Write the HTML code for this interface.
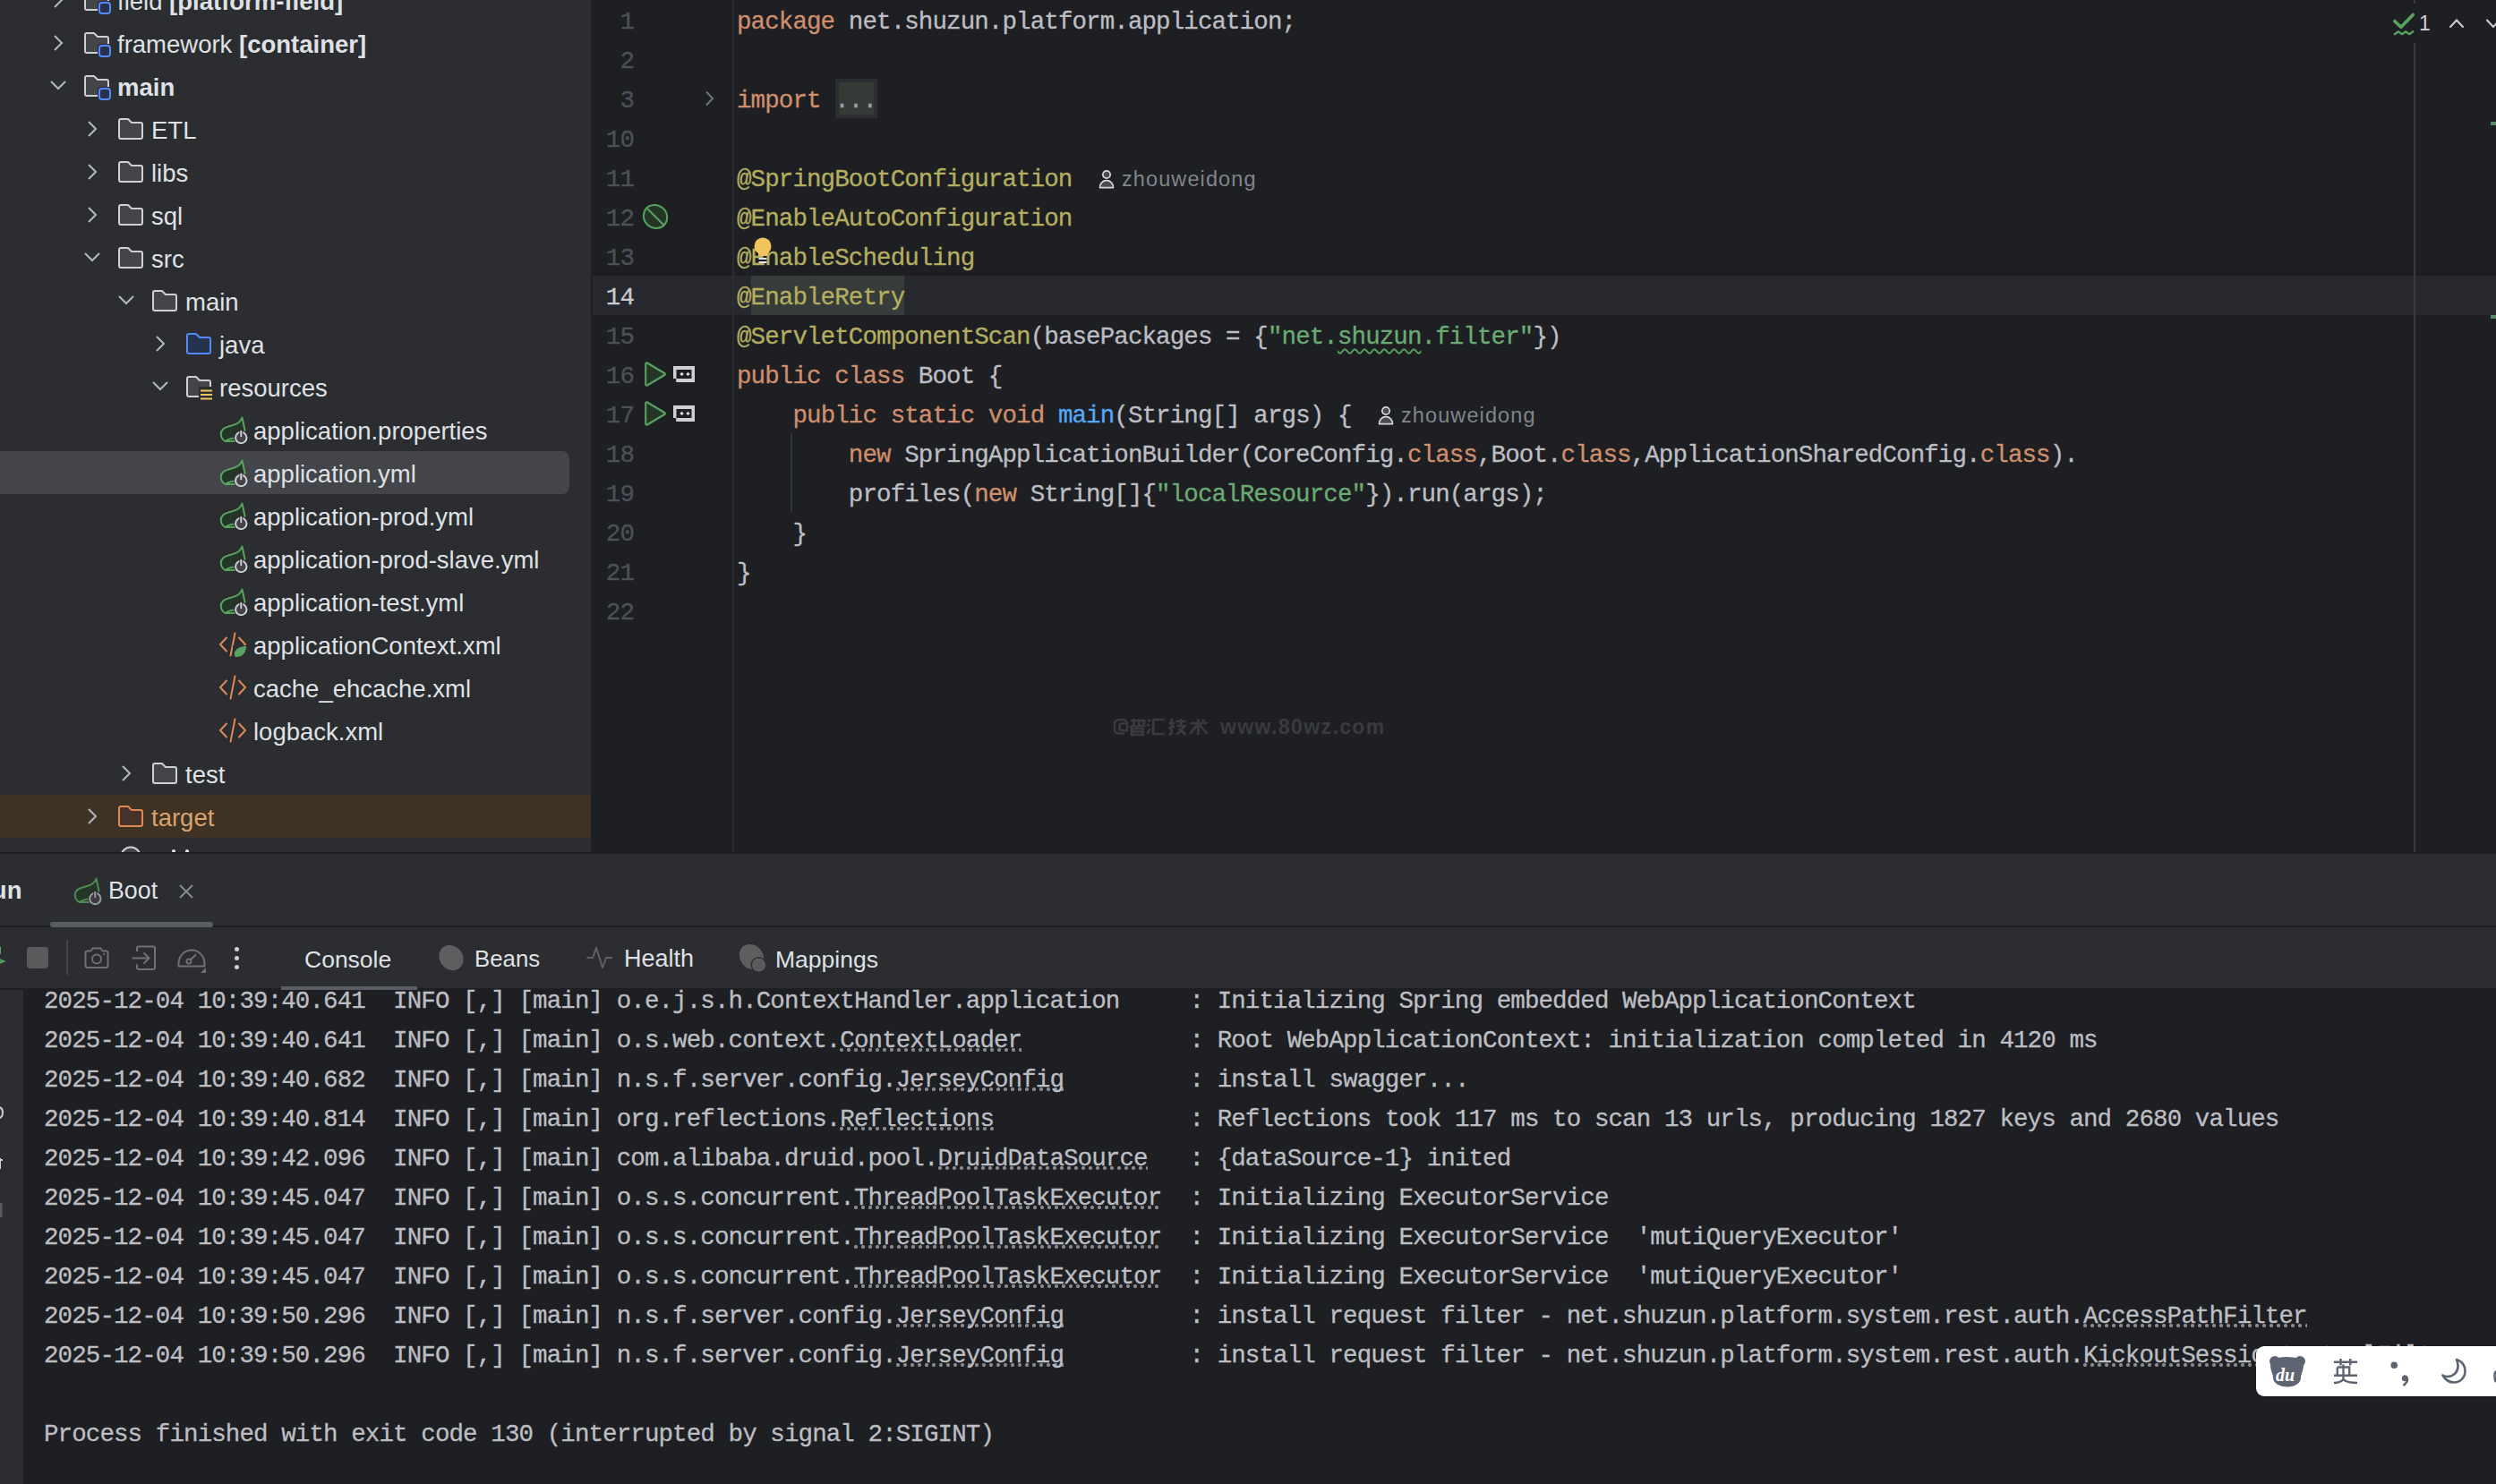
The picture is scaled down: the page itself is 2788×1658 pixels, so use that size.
<!DOCTYPE html><html><head><meta charset="utf-8"><style>
*{margin:0;padding:0;box-sizing:border-box}
html,body{width:2788px;height:1658px;overflow:hidden;background:#1E1F22}
body{position:relative;font-family:"Liberation Sans",sans-serif}
.abs{position:absolute}
.ui{font-family:"Liberation Sans",sans-serif;white-space:pre;color:#DFE1E5;position:absolute;line-height:1}
.mono{font-family:"Liberation Mono",monospace;white-space:pre;position:absolute;font-size:27.5px;letter-spacing:-0.9px;line-height:44px;color:#BCBEC4;-webkit-text-stroke:0.3px currentColor}
svg{position:absolute;overflow:visible}
.kw{color:#CF8E6D} .ann{color:#B3AE60} .str{color:#6AAB73} .fn{color:#56A8F5}
.dl{background-image:radial-gradient(circle at 4px 4px,#85878C 1.9px,transparent 2.3px);background-size:8px 8px;background-repeat:repeat-x;background-position:-2px calc(100% - 1px)}
</style></head><body>
<div class="abs" style="left:0;top:0;width:660px;height:952px;background:#2B2D30;overflow:hidden">
<div class="abs" style="left:0;top:504px;width:636px;height:48px;background:#43454A;border-radius:0 8px 8px 0"></div>
<div class="abs" style="left:0;top:888px;width:660px;height:48px;background:#3D3223"></div>
<svg style="left:49px;top:-16px" width="32" height="32" viewBox="0 0 32 32"><path d="M12 8L20 16L12 24" fill="none" stroke="#B4B8BF" stroke-width="2"/></svg>
<svg style="left:92px;top:-16px" width="32" height="32" viewBox="0 0 32 32"><path d="M3 7C3 5.9 3.9 5 5 5H12.6C12.85 5 13.1 5.1 13.3 5.3L16.7 8.7C16.9 8.9 17.15 9 17.4 9H27C28.1 9 29 9.9 29 11V25C29 26.1 28.1 27 27 27H5C3.9 27 3 26.1 3 25V7Z" fill="#43454A" stroke="#CED0D6" stroke-width="2"/><rect x="17" y="17" width="16" height="16" rx="4" fill="#2B2D30"/><rect x="19" y="19" width="12" height="12" rx="3" fill="#25324D" stroke="#548AF7" stroke-width="2"/></svg>
<div class="ui" style="left:131px;top:-11.9px;font-size:27.5px;color:#DFE1E5"><span style="font-weight:400">field </span><span style="font-weight:700">[platform-field]</span></div>
<svg style="left:49px;top:32px" width="32" height="32" viewBox="0 0 32 32"><path d="M12 8L20 16L12 24" fill="none" stroke="#B4B8BF" stroke-width="2"/></svg>
<svg style="left:92px;top:32px" width="32" height="32" viewBox="0 0 32 32"><path d="M3 7C3 5.9 3.9 5 5 5H12.6C12.85 5 13.1 5.1 13.3 5.3L16.7 8.7C16.9 8.9 17.15 9 17.4 9H27C28.1 9 29 9.9 29 11V25C29 26.1 28.1 27 27 27H5C3.9 27 3 26.1 3 25V7Z" fill="#43454A" stroke="#CED0D6" stroke-width="2"/><rect x="17" y="17" width="16" height="16" rx="4" fill="#2B2D30"/><rect x="19" y="19" width="12" height="12" rx="3" fill="#25324D" stroke="#548AF7" stroke-width="2"/></svg>
<div class="ui" style="left:131px;top:36.1px;font-size:27.5px;color:#DFE1E5"><span style="font-weight:400">framework </span><span style="font-weight:700">[container]</span></div>
<svg style="left:49px;top:80px" width="32" height="32" viewBox="0 0 32 32"><path d="M8 11L16 19L24 11" fill="none" stroke="#B4B8BF" stroke-width="2"/></svg>
<svg style="left:92px;top:80px" width="32" height="32" viewBox="0 0 32 32"><path d="M3 7C3 5.9 3.9 5 5 5H12.6C12.85 5 13.1 5.1 13.3 5.3L16.7 8.7C16.9 8.9 17.15 9 17.4 9H27C28.1 9 29 9.9 29 11V25C29 26.1 28.1 27 27 27H5C3.9 27 3 26.1 3 25V7Z" fill="#43454A" stroke="#CED0D6" stroke-width="2"/><rect x="17" y="17" width="16" height="16" rx="4" fill="#2B2D30"/><rect x="19" y="19" width="12" height="12" rx="3" fill="#25324D" stroke="#548AF7" stroke-width="2"/></svg>
<div class="ui" style="left:131px;top:84.1px;font-size:27.5px;color:#DFE1E5"><span style="font-weight:700">main</span></div>
<svg style="left:87px;top:128px" width="32" height="32" viewBox="0 0 32 32"><path d="M12 8L20 16L12 24" fill="none" stroke="#B4B8BF" stroke-width="2"/></svg>
<svg style="left:130px;top:128px" width="32" height="32" viewBox="0 0 32 32"><path d="M3 7C3 5.9 3.9 5 5 5H12.6C12.85 5 13.1 5.1 13.3 5.3L16.7 8.7C16.9 8.9 17.15 9 17.4 9H27C28.1 9 29 9.9 29 11V25C29 26.1 28.1 27 27 27H5C3.9 27 3 26.1 3 25V7Z" fill="#43454A" stroke="#CED0D6" stroke-width="2"/></svg>
<div class="ui" style="left:169px;top:132.1px;font-size:27.5px;color:#DFE1E5"><span style="font-weight:400">ETL</span></div>
<svg style="left:87px;top:176px" width="32" height="32" viewBox="0 0 32 32"><path d="M12 8L20 16L12 24" fill="none" stroke="#B4B8BF" stroke-width="2"/></svg>
<svg style="left:130px;top:176px" width="32" height="32" viewBox="0 0 32 32"><path d="M3 7C3 5.9 3.9 5 5 5H12.6C12.85 5 13.1 5.1 13.3 5.3L16.7 8.7C16.9 8.9 17.15 9 17.4 9H27C28.1 9 29 9.9 29 11V25C29 26.1 28.1 27 27 27H5C3.9 27 3 26.1 3 25V7Z" fill="#43454A" stroke="#CED0D6" stroke-width="2"/></svg>
<div class="ui" style="left:169px;top:180.1px;font-size:27.5px;color:#DFE1E5"><span style="font-weight:400">libs</span></div>
<svg style="left:87px;top:224px" width="32" height="32" viewBox="0 0 32 32"><path d="M12 8L20 16L12 24" fill="none" stroke="#B4B8BF" stroke-width="2"/></svg>
<svg style="left:130px;top:224px" width="32" height="32" viewBox="0 0 32 32"><path d="M3 7C3 5.9 3.9 5 5 5H12.6C12.85 5 13.1 5.1 13.3 5.3L16.7 8.7C16.9 8.9 17.15 9 17.4 9H27C28.1 9 29 9.9 29 11V25C29 26.1 28.1 27 27 27H5C3.9 27 3 26.1 3 25V7Z" fill="#43454A" stroke="#CED0D6" stroke-width="2"/></svg>
<div class="ui" style="left:169px;top:228.1px;font-size:27.5px;color:#DFE1E5"><span style="font-weight:400">sql</span></div>
<svg style="left:87px;top:272px" width="32" height="32" viewBox="0 0 32 32"><path d="M8 11L16 19L24 11" fill="none" stroke="#B4B8BF" stroke-width="2"/></svg>
<svg style="left:130px;top:272px" width="32" height="32" viewBox="0 0 32 32"><path d="M3 7C3 5.9 3.9 5 5 5H12.6C12.85 5 13.1 5.1 13.3 5.3L16.7 8.7C16.9 8.9 17.15 9 17.4 9H27C28.1 9 29 9.9 29 11V25C29 26.1 28.1 27 27 27H5C3.9 27 3 26.1 3 25V7Z" fill="#43454A" stroke="#CED0D6" stroke-width="2"/></svg>
<div class="ui" style="left:169px;top:276.1px;font-size:27.5px;color:#DFE1E5"><span style="font-weight:400">src</span></div>
<svg style="left:125px;top:320px" width="32" height="32" viewBox="0 0 32 32"><path d="M8 11L16 19L24 11" fill="none" stroke="#B4B8BF" stroke-width="2"/></svg>
<svg style="left:168px;top:320px" width="32" height="32" viewBox="0 0 32 32"><path d="M3 7C3 5.9 3.9 5 5 5H12.6C12.85 5 13.1 5.1 13.3 5.3L16.7 8.7C16.9 8.9 17.15 9 17.4 9H27C28.1 9 29 9.9 29 11V25C29 26.1 28.1 27 27 27H5C3.9 27 3 26.1 3 25V7Z" fill="#43454A" stroke="#CED0D6" stroke-width="2"/></svg>
<div class="ui" style="left:207px;top:324.1px;font-size:27.5px;color:#DFE1E5"><span style="font-weight:400">main</span></div>
<svg style="left:163px;top:368px" width="32" height="32" viewBox="0 0 32 32"><path d="M12 8L20 16L12 24" fill="none" stroke="#B4B8BF" stroke-width="2"/></svg>
<svg style="left:206px;top:368px" width="32" height="32" viewBox="0 0 32 32"><path d="M3 7C3 5.9 3.9 5 5 5H12.6C12.85 5 13.1 5.1 13.3 5.3L16.7 8.7C16.9 8.9 17.15 9 17.4 9H27C28.1 9 29 9.9 29 11V25C29 26.1 28.1 27 27 27H5C3.9 27 3 26.1 3 25V7Z" fill="#25324D" stroke="#548AF7" stroke-width="2"/></svg>
<div class="ui" style="left:245px;top:372.1px;font-size:27.5px;color:#DFE1E5"><span style="font-weight:400">java</span></div>
<svg style="left:163px;top:416px" width="32" height="32" viewBox="0 0 32 32"><path d="M8 11L16 19L24 11" fill="none" stroke="#B4B8BF" stroke-width="2"/></svg>
<svg style="left:206px;top:416px" width="32" height="32" viewBox="0 0 32 32"><path d="M3 7C3 5.9 3.9 5 5 5H12.6C12.85 5 13.1 5.1 13.3 5.3L16.7 8.7C16.9 8.9 17.15 9 17.4 9H27C28.1 9 29 9.9 29 11V25C29 26.1 28.1 27 27 27H5C3.9 27 3 26.1 3 25V7Z" fill="#43454A" stroke="#CED0D6" stroke-width="2"/><rect x="16" y="16" width="17" height="16" fill="#2B2D30"/><path d="M18 20.5H31M18 25H31M18 29.5H31" stroke="#F2C55C" stroke-width="2"/></svg>
<div class="ui" style="left:245px;top:420.1px;font-size:27.5px;color:#DFE1E5"><span style="font-weight:400">resources</span></div>
<svg style="left:244px;top:464px" width="32" height="32" viewBox="0 0 32 32"><path d="M26.5 2.5C25 8 20 10.5 13 12C6 13.5 2.5 17 2.8 21.5C3 25 5 27.5 7.5 29H18.5L21 24C25 22.5 28.5 20.5 29.5 16.5C28.5 12 27.5 7 26.5 2.5Z" fill="#253627" stroke="#58A360" stroke-width="2" stroke-linejoin="round"/><path d="M7.5 29C10 27 14 26 18 25.5" fill="none" stroke="#58A360" stroke-width="2"/><circle cx="25.3" cy="25" r="8.2" fill="#2B2D30"/><circle cx="25.3" cy="25" r="6.2" fill="#43454A" stroke="#CED0D6" stroke-width="2"/><path d="M25.3 16.5V24.5" stroke="#2B2D30" stroke-width="4"/><path d="M25.3 17V24.2" stroke="#CED0D6" stroke-width="2"/></svg>
<div class="ui" style="left:283px;top:468.1px;font-size:27.5px;color:#DFE1E5"><span style="font-weight:400">application.properties</span></div>
<svg style="left:244px;top:512px" width="32" height="32" viewBox="0 0 32 32"><path d="M26.5 2.5C25 8 20 10.5 13 12C6 13.5 2.5 17 2.8 21.5C3 25 5 27.5 7.5 29H18.5L21 24C25 22.5 28.5 20.5 29.5 16.5C28.5 12 27.5 7 26.5 2.5Z" fill="#253627" stroke="#58A360" stroke-width="2" stroke-linejoin="round"/><path d="M7.5 29C10 27 14 26 18 25.5" fill="none" stroke="#58A360" stroke-width="2"/><circle cx="25.3" cy="25" r="8.2" fill="#43454A"/><circle cx="25.3" cy="25" r="6.2" fill="#43454A" stroke="#CED0D6" stroke-width="2"/><path d="M25.3 16.5V24.5" stroke="#43454A" stroke-width="4"/><path d="M25.3 17V24.2" stroke="#CED0D6" stroke-width="2"/></svg>
<div class="ui" style="left:283px;top:516.1px;font-size:27.5px;color:#DFE1E5"><span style="font-weight:400">application.yml</span></div>
<svg style="left:244px;top:560px" width="32" height="32" viewBox="0 0 32 32"><path d="M26.5 2.5C25 8 20 10.5 13 12C6 13.5 2.5 17 2.8 21.5C3 25 5 27.5 7.5 29H18.5L21 24C25 22.5 28.5 20.5 29.5 16.5C28.5 12 27.5 7 26.5 2.5Z" fill="#253627" stroke="#58A360" stroke-width="2" stroke-linejoin="round"/><path d="M7.5 29C10 27 14 26 18 25.5" fill="none" stroke="#58A360" stroke-width="2"/><circle cx="25.3" cy="25" r="8.2" fill="#2B2D30"/><circle cx="25.3" cy="25" r="6.2" fill="#43454A" stroke="#CED0D6" stroke-width="2"/><path d="M25.3 16.5V24.5" stroke="#2B2D30" stroke-width="4"/><path d="M25.3 17V24.2" stroke="#CED0D6" stroke-width="2"/></svg>
<div class="ui" style="left:283px;top:564.1px;font-size:27.5px;color:#DFE1E5"><span style="font-weight:400">application-prod.yml</span></div>
<svg style="left:244px;top:608px" width="32" height="32" viewBox="0 0 32 32"><path d="M26.5 2.5C25 8 20 10.5 13 12C6 13.5 2.5 17 2.8 21.5C3 25 5 27.5 7.5 29H18.5L21 24C25 22.5 28.5 20.5 29.5 16.5C28.5 12 27.5 7 26.5 2.5Z" fill="#253627" stroke="#58A360" stroke-width="2" stroke-linejoin="round"/><path d="M7.5 29C10 27 14 26 18 25.5" fill="none" stroke="#58A360" stroke-width="2"/><circle cx="25.3" cy="25" r="8.2" fill="#2B2D30"/><circle cx="25.3" cy="25" r="6.2" fill="#43454A" stroke="#CED0D6" stroke-width="2"/><path d="M25.3 16.5V24.5" stroke="#2B2D30" stroke-width="4"/><path d="M25.3 17V24.2" stroke="#CED0D6" stroke-width="2"/></svg>
<div class="ui" style="left:283px;top:612.1px;font-size:27.5px;color:#DFE1E5"><span style="font-weight:400">application-prod-slave.yml</span></div>
<svg style="left:244px;top:656px" width="32" height="32" viewBox="0 0 32 32"><path d="M26.5 2.5C25 8 20 10.5 13 12C6 13.5 2.5 17 2.8 21.5C3 25 5 27.5 7.5 29H18.5L21 24C25 22.5 28.5 20.5 29.5 16.5C28.5 12 27.5 7 26.5 2.5Z" fill="#253627" stroke="#58A360" stroke-width="2" stroke-linejoin="round"/><path d="M7.5 29C10 27 14 26 18 25.5" fill="none" stroke="#58A360" stroke-width="2"/><circle cx="25.3" cy="25" r="8.2" fill="#2B2D30"/><circle cx="25.3" cy="25" r="6.2" fill="#43454A" stroke="#CED0D6" stroke-width="2"/><path d="M25.3 16.5V24.5" stroke="#2B2D30" stroke-width="4"/><path d="M25.3 17V24.2" stroke="#CED0D6" stroke-width="2"/></svg>
<div class="ui" style="left:283px;top:660.1px;font-size:27.5px;color:#DFE1E5"><span style="font-weight:400">application-test.yml</span></div>
<svg style="left:244px;top:704px" width="32" height="32" viewBox="0 0 32 32"><path d="M9 8.5L2 16L9 23.5M23 8.5L30 16L23 23.5M18.5 3.5L13.5 28.5" fill="none" stroke="#E08855" stroke-width="2" stroke-linecap="round" stroke-linejoin="round"/><rect x="16" y="17" width="17" height="15" fill="#2B2D30"/><path d="M31 18C27 18 20 19 18 25C17.5 27 18 29 19 30C26 30.5 31 26 31 18Z" fill="#58A360"/></svg>
<div class="ui" style="left:283px;top:708.1px;font-size:27.5px;color:#DFE1E5"><span style="font-weight:400">applicationContext.xml</span></div>
<svg style="left:244px;top:752px" width="32" height="32" viewBox="0 0 32 32"><path d="M9 8.5L2 16L9 23.5M23 8.5L30 16L23 23.5M18.5 3.5L13.5 28.5" fill="none" stroke="#E08855" stroke-width="2" stroke-linecap="round" stroke-linejoin="round"/></svg>
<div class="ui" style="left:283px;top:756.1px;font-size:27.5px;color:#DFE1E5"><span style="font-weight:400">cache_ehcache.xml</span></div>
<svg style="left:244px;top:800px" width="32" height="32" viewBox="0 0 32 32"><path d="M9 8.5L2 16L9 23.5M23 8.5L30 16L23 23.5M18.5 3.5L13.5 28.5" fill="none" stroke="#E08855" stroke-width="2" stroke-linecap="round" stroke-linejoin="round"/></svg>
<div class="ui" style="left:283px;top:804.1px;font-size:27.5px;color:#DFE1E5"><span style="font-weight:400">logback.xml</span></div>
<svg style="left:125px;top:848px" width="32" height="32" viewBox="0 0 32 32"><path d="M12 8L20 16L12 24" fill="none" stroke="#B4B8BF" stroke-width="2"/></svg>
<svg style="left:168px;top:848px" width="32" height="32" viewBox="0 0 32 32"><path d="M3 7C3 5.9 3.9 5 5 5H12.6C12.85 5 13.1 5.1 13.3 5.3L16.7 8.7C16.9 8.9 17.15 9 17.4 9H27C28.1 9 29 9.9 29 11V25C29 26.1 28.1 27 27 27H5C3.9 27 3 26.1 3 25V7Z" fill="#43454A" stroke="#CED0D6" stroke-width="2"/></svg>
<div class="ui" style="left:207px;top:852.1px;font-size:27.5px;color:#DFE1E5"><span style="font-weight:400">test</span></div>
<svg style="left:87px;top:896px" width="32" height="32" viewBox="0 0 32 32"><path d="M12 8L20 16L12 24" fill="none" stroke="#B4B8BF" stroke-width="2"/></svg>
<svg style="left:130px;top:896px" width="32" height="32" viewBox="0 0 32 32"><path d="M3 7C3 5.9 3.9 5 5 5H12.6C12.85 5 13.1 5.1 13.3 5.3L16.7 8.7C16.9 8.9 17.15 9 17.4 9H27C28.1 9 29 9.9 29 11V25C29 26.1 28.1 27 27 27H5C3.9 27 3 26.1 3 25V7Z" fill="#45322B" stroke="#E08855" stroke-width="2"/></svg>
<div class="ui" style="left:169px;top:900.1px;font-size:27.5px;color:#D9A36F"><span style="font-weight:400">target</span></div>
<svg style="left:130px;top:941px" width="32" height="32" viewBox="0 0 32 32"><circle cx="16" cy="16" r="10.5" fill="#43454A" stroke="#CED0D6" stroke-width="2.2"/></svg>
<div class="abs" style="left:192px;top:949px;width:4px;height:4px;border-radius:50%;background:#DFE1E5"></div>
<div class="abs" style="left:207px;top:949px;width:4px;height:4px;border-radius:50%;background:#DFE1E5"></div>
</div>
<div class="abs" style="left:660px;top:0;width:2128px;height:952px;background:#1E1F22;overflow:hidden">
<div class="abs" style="left:2px;top:308px;width:2200px;height:44px;background:#26282E"></div>
<div class="abs" style="left:178.6px;top:308px;width:171.6px;height:44px;background:#373B39"></div>
<div class="abs" style="left:158px;top:0;width:2px;height:952px;background:#2B2D30"></div>
<div class="abs" style="left:223px;top:484px;width:2px;height:88px;background:#313438"></div>
<div class="abs" style="left:2036px;top:0;width:2px;height:4px;background:#393B40"></div>
<div class="abs" style="left:2036px;top:48px;width:2px;height:904px;background:#393B40"></div>
<div class="mono" style="left:32.4px;top:3px;color:#4B5059">1</div>
<div class="mono" style="left:32.4px;top:47px;color:#4B5059">2</div>
<div class="mono" style="left:32.4px;top:91px;color:#4B5059">3</div>
<div class="mono" style="left:16.8px;top:135px;color:#4B5059">10</div>
<div class="mono" style="left:16.8px;top:179px;color:#4B5059">11</div>
<div class="mono" style="left:16.8px;top:223px;color:#4B5059">12</div>
<div class="mono" style="left:16.8px;top:267px;color:#4B5059">13</div>
<div class="mono" style="left:16.8px;top:311px;color:#C9CBD0">14</div>
<div class="mono" style="left:16.8px;top:355px;color:#4B5059">15</div>
<div class="mono" style="left:16.8px;top:399px;color:#4B5059">16</div>
<div class="mono" style="left:16.8px;top:443px;color:#4B5059">17</div>
<div class="mono" style="left:16.8px;top:487px;color:#4B5059">18</div>
<div class="mono" style="left:16.8px;top:531px;color:#4B5059">19</div>
<div class="mono" style="left:16.8px;top:575px;color:#4B5059">20</div>
<div class="mono" style="left:16.8px;top:619px;color:#4B5059">21</div>
<div class="mono" style="left:16.8px;top:663px;color:#4B5059">22</div>
<div class="mono" style="left:163px;top:3px"><span class="kw">package</span> net.shuzun.platform.application;</div>
<div class="mono" style="left:163px;top:91px"><span class="kw">import</span></div>
<div class="mono" style="left:163px;top:179px"><span class="ann">@SpringBootConfiguration</span></div>
<div class="mono" style="left:163px;top:223px"><span class="ann">@EnableAutoConfiguration</span></div>
<div class="mono" style="left:163px;top:267px"><span class="ann">@EnableScheduling</span></div>
<div class="mono" style="left:163px;top:311px"><span class="ann">@EnableRetry</span></div>
<div class="mono" style="left:163px;top:355px"><span class="ann">@ServletComponentScan</span>(basePackages = {<span class="str">&quot;net.</span><span class="str" style="text-decoration:underline wavy #58A360;text-decoration-thickness:1.5px;text-underline-offset:5px">shuzun</span><span class="str">.filter&quot;</span>})</div>
<div class="mono" style="left:163px;top:399px"><span class="kw">public class</span> Boot {</div>
<div class="mono" style="left:163px;top:443px">    <span class="kw">public static void</span> <span class="fn">main</span>(String[] args) {</div>
<div class="mono" style="left:163px;top:487px">        <span class="kw">new</span> SpringApplicationBuilder(CoreConfig.<span class="kw">class</span>,Boot.<span class="kw">class</span>,ApplicationSharedConfig.<span class="kw">class</span>).</div>
<div class="mono" style="left:163px;top:531px">        profiles(<span class="kw">new</span> String[]{<span class="str">&quot;localResource&quot;</span>}).run(args);</div>
<div class="mono" style="left:163px;top:575px">    }</div>
<div class="mono" style="left:163px;top:619px">}</div>
<div class="abs" style="left:273px;top:88px;width:47px;height:44px;background:#363A37;border:4px solid #2B2D30"></div>
<div class="mono" style="left:272.2px;top:91px;color:#9EA1A8">...</div>
<svg style="left:567px;top:189.5px" width="20" height="22" viewBox="0 0 20 22"><circle cx="9" cy="5" r="4.2" fill="#4A4C51" stroke="#D5D7DB" stroke-width="1.7"/><path d="M1.5 19.6C1.5 14.8 4.8 11.7 9 11.7C13.2 11.7 16.5 14.8 16.5 19.6Z" fill="#4A4C51" stroke="#D5D7DB" stroke-width="1.7" stroke-linejoin="round"/></svg>
<div class="ui" style="left:593px;top:188.61px;font-size:23.5px;color:#80848B;letter-spacing:1.1px">zhouweidong</div>
<svg style="left:879px;top:453.5px" width="20" height="22" viewBox="0 0 20 22"><circle cx="9" cy="5" r="4.2" fill="#4A4C51" stroke="#D5D7DB" stroke-width="1.7"/><path d="M1.5 19.6C1.5 14.8 4.8 11.7 9 11.7C13.2 11.7 16.5 14.8 16.5 19.6Z" fill="#4A4C51" stroke="#D5D7DB" stroke-width="1.7" stroke-linejoin="round"/></svg>
<div class="ui" style="left:905px;top:452.61px;font-size:23.5px;color:#80848B;letter-spacing:1.1px">zhouweidong</div>
<svg style="left:118px;top:94px" width="32" height="32" viewBox="0 0 32 32"><path d="M11 8.5L18 16L11 23.5" fill="none" stroke="#6F737A" stroke-width="2"/></svg>
<svg style="left:56px;top:226px" width="32" height="32" viewBox="0 0 32 32"><ellipse cx="16" cy="16" rx="13.6" ry="12.6" fill="#253627" stroke="#58A360" stroke-width="2" transform="rotate(40 16 16)"/><path d="M7 7L25 25" stroke="#58A360" stroke-width="2"/></svg>
<svg style="left:55px;top:402px" width="32" height="32" viewBox="0 0 32 32"><path d="M6.2 4.5C6.2 3.6 7.2 3 8 3.5L27.3 15C28 15.4 28 16.6 27.3 17L8 28.5C7.2 29 6.2 28.4 6.2 27.5Z" fill="#253627" stroke="#58A360" stroke-width="2.1" stroke-linejoin="round"/></svg>
<svg style="left:88px;top:404px" width="32" height="32" viewBox="0 0 32 32"><path fill-rule="evenodd" d="M4 5H28V23H7.2V19H4ZM7.5 9V19H24.5V9Z" fill="#CED0D6"/><path d="M13.6 11.7L15.8 13.9L13.6 16.1L11.4 13.9ZM20.5 11.7L22.7 13.9L20.5 16.1L18.3 13.9Z" fill="#DFE1E5"/></svg>
<svg style="left:55px;top:446px" width="32" height="32" viewBox="0 0 32 32"><path d="M6.2 4.5C6.2 3.6 7.2 3 8 3.5L27.3 15C28 15.4 28 16.6 27.3 17L8 28.5C7.2 29 6.2 28.4 6.2 27.5Z" fill="#253627" stroke="#58A360" stroke-width="2.1" stroke-linejoin="round"/></svg>
<svg style="left:88px;top:448px" width="32" height="32" viewBox="0 0 32 32"><path fill-rule="evenodd" d="M4 5H28V23H7.2V19H4ZM7.5 9V19H24.5V9Z" fill="#CED0D6"/><path d="M13.6 11.7L15.8 13.9L13.6 16.1L11.4 13.9ZM20.5 11.7L22.7 13.9L20.5 16.1L18.3 13.9Z" fill="#DFE1E5"/></svg>
<svg style="left:176px;top:262px" width="32" height="36" viewBox="0 0 32 36"><circle cx="16" cy="13" r="9.5" fill="#F2C55C"/><rect x="11" y="20" width="10" height="4" fill="#F2C55C"/><path d="M11.5 27H20.5M11.5 31H20.5" stroke="#DFE1E5" stroke-width="2.2"/></svg>
<svg style="left:2010px;top:10px" width="32" height="32" viewBox="0 0 32 32"><path d="M4.8 13.7L12 20.3L25.3 6.5" fill="none" stroke="#58A360" stroke-width="3.6" stroke-linecap="round" stroke-linejoin="round"/><path d="M4.8 28.2L8.9 25.3L13 28.2L17.1 25.3L21.2 28.2L25.3 25.3" fill="none" stroke="#58A360" stroke-width="2.3" stroke-linecap="round" stroke-linejoin="round"/></svg>
<div class="ui" style="left:2042px;top:14.83px;font-size:23px;color:#CED0D6">1</div>
<svg style="left:2070px;top:10px" width="28" height="28" viewBox="0 0 28 28"><path d="M7 20L14 12.5L21 20" fill="none" stroke="#CED0D6" stroke-width="2" stroke-linecap="round"/></svg>
<svg style="left:2111px;top:10px" width="28" height="28" viewBox="0 0 28 28"><path d="M7 12.5L14 20L21 12.5" fill="none" stroke="#CED0D6" stroke-width="2" stroke-linecap="round"/></svg>
<div class="abs" style="left:2122px;top:136px;width:6px;height:4px;background:#5A8A65"></div>
<div class="abs" style="left:2122px;top:352px;width:6px;height:4px;background:#5A8A65"></div>
<svg style="left:583px;top:800px" width="310" height="24" viewBox="0 0 310 24" fill="none" stroke="#3A3B3F" stroke-width="2.6"><path d="M13 19.5H6C3.5 19.5 2 17.5 2 15V9C2 6 4 4 7 4H11C14 4 16 6 16 9V16H10C8.5 16 7.5 15 7.5 13.5V11C7.5 9.5 8.5 8.5 10 8.5H16"/><g transform="translate(19.5 0) scale(1.14 1) translate(-19.5 0)"><path d="M20 5H27M23 3V10L19 13M23 10L27 13M28 5H33V11H28ZM21 14H32V21H21ZM21 17.5H32"/><path d="M37 4L39 6M36 9L38 11M36 20L39 14M42 4H53M42 4V20H53"/><path d="M57 8H63M60 3V19L57 21M57 14L63 11M64 6H74M69 3V10M65 11H73L65 21M67 14L74 21"/><path d="M78 8H95M86 3V21M86 8L78 20M86 8L95 20M90 4L92 6"/></g></svg>
<div class="ui" style="left:703px;top:800.53px;font-size:23px;color:#3A3B3F;font-weight:700;letter-spacing:1.4px">www.80wz.com</div>
</div>
<div class="abs" style="left:0;top:952px;width:2788px;height:706px;background:#2B2D30;overflow:hidden">
<div class="abs" style="left:0;top:0;width:2788px;height:2px;background:#1E1F22"></div>
<div class="abs" style="left:0;top:82px;width:2788px;height:2px;background:#1E1F22"></div>
<div class="ui" style="left:-29px;top:29.22px;font-size:27.5px;font-weight:700">Run</div>
<svg style="left:81px;top:27px" width="32" height="32" viewBox="0 0 32 32"><path d="M26.5 2.5C25 8 20 10.5 13 12C6 13.5 2.5 17 2.8 21.5C3 25 5 27.5 7.5 29H18.5L21 24C25 22.5 28.5 20.5 29.5 16.5C28.5 12 27.5 7 26.5 2.5Z" fill="#253627" stroke="#4E8A55" stroke-width="2" stroke-linejoin="round"/><path d="M7.5 29C10 27 14 26 18 25.5" fill="none" stroke="#4E8A55" stroke-width="2"/><circle cx="25.3" cy="25" r="8.2" fill="#2B2D30"/><circle cx="25.3" cy="25" r="6.2" fill="#3A3C40" stroke="#9A9DA3" stroke-width="2"/><path d="M25.3 16.5V24.5" stroke="#2B2D30" stroke-width="4"/><path d="M25.3 17V24.2" stroke="#9A9DA3" stroke-width="2"/></svg>
<div class="ui" style="left:121px;top:30.31px;font-size:26.8px;">Boot</div>
<svg style="left:192px;top:28px" width="32" height="32" viewBox="0 0 32 32"><path d="M9 9L23 23M23 9L9 23" stroke="#8C8F96" stroke-width="1.8"/></svg>
<div class="abs" style="left:56px;top:78px;width:182px;height:6px;border-radius:3px;background:#5A5D63"></div>
<svg style="left:-10px;top:102px" width="32" height="32" viewBox="0 0 32 32"><path d="M10 4V12M4 16L14 20L4 24" fill="none" stroke="#58A360" stroke-width="2"/></svg>
<div class="abs" style="left:30px;top:106px;width:24px;height:24px;border-radius:4px;background:#5A5A5C"></div>
<div class="abs" style="left:74px;top:98px;width:2px;height:39px;background:#43454A"></div>
<svg style="left:92px;top:102px" width="32" height="32" viewBox="0 0 32 32"><path d="M3.5 10.5C3.5 9.4 4.4 8.5 5.5 8.5H9.5L11.5 5.5H20.5L22.5 8.5H26.5C27.6 8.5 28.5 9.4 28.5 10.5V25C28.5 26.1 27.6 27 26.5 27H5.5C4.4 27 3.5 26.1 3.5 25Z" fill="none" stroke="#6F7177" stroke-width="2" stroke-linejoin="round"/><circle cx="16" cy="17.5" r="5" fill="none" stroke="#6F7177" stroke-width="2"/><circle cx="24" cy="12" r="1" fill="#6F7177"/></svg>
<svg style="left:146px;top:102px" width="32" height="32" viewBox="0 0 32 32"><path d="M7 9V5.5C7 4.4 7.9 3.5 9 3.5H25C26.1 3.5 27 4.4 27 5.5V27C27 28.1 26.1 29 25 29H9C7.9 29 7 28.1 7 27V23.5" fill="none" stroke="#6F7177" stroke-width="2"/><path d="M1.5 16.5H20.5M14.5 10.5L20.5 16.5L14.5 22.5" fill="none" stroke="#6F7177" stroke-width="2"/></svg>
<svg style="left:196px;top:102px" width="36" height="36" viewBox="0 0 36 36"><path d="M3.5 23C3.5 14 10 7.5 18 7.5C26 7.5 32.5 14 32.5 23V25.5H3.5Z" fill="none" stroke="#6F7177" stroke-width="2" stroke-linejoin="round"/><circle cx="15" cy="20" r="2.5" fill="none" stroke="#6F7177" stroke-width="2"/><path d="M17 18L23 12.5" stroke="#6F7177" stroke-width="2"/><path d="M34 27L34 33L28 33Z" fill="#6F7177"/></svg>
<div class="abs" style="left:261.5px;top:105.5px;width:5px;height:5px;border-radius:50%;background:#CED0D6"></div>
<div class="abs" style="left:261.5px;top:115.5px;width:5px;height:5px;border-radius:50%;background:#CED0D6"></div>
<div class="abs" style="left:261.5px;top:125.5px;width:5px;height:5px;border-radius:50%;background:#CED0D6"></div>
<div class="ui" style="left:340px;top:106.57px;font-size:26.5px;">Console</div>
<svg style="left:488px;top:102px" width="32" height="32" viewBox="0 0 32 32"><ellipse cx="16" cy="16" rx="12.8" ry="14.8" fill="#5E5E60" transform="rotate(-38 16 16)"/></svg>
<div class="ui" style="left:530px;top:107.16px;font-size:25.8px;">Beans</div>
<svg style="left:654px;top:102px" width="32" height="32" viewBox="0 0 32 32"><path d="M1.5 16H8L12 5L19 27L23 16H30" fill="none" stroke="#5F6165" stroke-width="2" stroke-linejoin="round"/></svg>
<div class="ui" style="left:697px;top:106.14px;font-size:27px;">Health</div>
<svg style="left:824px;top:102px" width="36" height="36" viewBox="0 0 36 36"><ellipse cx="15.5" cy="15" rx="12.8" ry="14.8" fill="#5E5E60" transform="rotate(-38 15.5 15)"/><circle cx="23.5" cy="24" r="9" fill="#2B2D30"/><circle cx="23.5" cy="24" r="7.5" fill="#5E5E60"/><g fill="#4A4B4D"><circle cx="20.5" cy="21" r="0.8"/><circle cx="23.5" cy="21" r="0.8"/><circle cx="26.5" cy="21" r="0.8"/><circle cx="20.5" cy="24" r="0.8"/><circle cx="23.5" cy="24" r="0.8"/><circle cx="26.5" cy="24" r="0.8"/><circle cx="20.5" cy="27" r="0.8"/><circle cx="23.5" cy="27" r="0.8"/><circle cx="26.5" cy="27" r="0.8"/></g></svg>
<div class="ui" style="left:866px;top:106.57px;font-size:26.5px;">Mappings</div>
<div class="abs" style="left:26px;top:152px;width:2762px;height:554px;background:#1E1F22"></div>
<div class="abs" style="left:0;top:152px;width:2788px;height:2px;background:#1E1F22"></div>
<div class="abs" style="left:314px;top:150px;width:152px;height:4px;background:#5A5D63"></div>
<svg style="left:0;top:278px" width="8" height="140" viewBox="0 0 8 140"><path d="M-4 8C0 6 3 8 3 13C3 18 0 20 -4 19" fill="none" stroke="#CED0D6" stroke-width="2"/><path d="M-3 66H3M0 64V76" fill="none" stroke="#CED0D6" stroke-width="2"/><rect x="-4" y="114" width="6.5" height="16" fill="#5A5A5C"/></svg>
<div class="mono" style="left:49px;top:145px">2025-12-04 10:39:40.641  INFO [,] [main] o.e.j.s.h.ContextHandler.application     : Initializing Spring embedded WebApplicationContext</div>
<div class="mono" style="left:49px;top:189px">2025-12-04 10:39:40.641  INFO [,] [main] o.s.web.context.<span class="dl">ContextLoader</span>            : Root WebApplicationContext: initialization completed in 4120 ms</div>
<div class="mono" style="left:49px;top:233px">2025-12-04 10:39:40.682  INFO [,] [main] n.s.f.server.config.<span class="dl">JerseyConfig</span>         : install swagger...</div>
<div class="mono" style="left:49px;top:277px">2025-12-04 10:39:40.814  INFO [,] [main] org.reflections.<span class="dl">Reflections</span>              : Reflections took 117 ms to scan 13 urls, producing 1827 keys and 2680 values</div>
<div class="mono" style="left:49px;top:321px">2025-12-04 10:39:42.096  INFO [,] [main] com.alibaba.druid.pool.<span class="dl">DruidDataSource</span>   : {dataSource-1} inited</div>
<div class="mono" style="left:49px;top:365px">2025-12-04 10:39:45.047  INFO [,] [main] o.s.s.concurrent.<span class="dl">ThreadPoolTaskExecutor</span>  : Initializing ExecutorService</div>
<div class="mono" style="left:49px;top:409px">2025-12-04 10:39:45.047  INFO [,] [main] o.s.s.concurrent.<span class="dl">ThreadPoolTaskExecutor</span>  : Initializing ExecutorService  &#x27;mutiQueryExecutor&#x27;</div>
<div class="mono" style="left:49px;top:453px">2025-12-04 10:39:45.047  INFO [,] [main] o.s.s.concurrent.<span class="dl">ThreadPoolTaskExecutor</span>  : Initializing ExecutorService  &#x27;mutiQueryExecutor&#x27;</div>
<div class="mono" style="left:49px;top:497px">2025-12-04 10:39:50.296  INFO [,] [main] n.s.f.server.config.<span class="dl">JerseyConfig</span>         : install request filter - net.shuzun.platform.system.rest.auth.<span class="dl">AccessPathFilter</span></div>
<div class="mono" style="left:49px;top:541px">2025-12-04 10:39:50.296  INFO [,] [main] n.s.f.server.config.<span class="dl">JerseyConfig</span>         : install request filter - net.shuzun.platform.system.rest.auth.<span class="dl">KickoutSessionControlFilter</span></div>
<div class="mono" style="left:49px;top:629px">Process finished with exit code 130 (interrupted by signal 2:SIGINT)</div>
<div class="abs" style="left:2520px;top:552px;width:300px;height:56px;border-radius:9px;background:#FFFFFF;box-shadow:0 1px 2px rgba(0,0,0,0.3)"></div>
<svg style="left:2520px;top:552px" width="268" height="56" viewBox="0 0 268 56"><circle cx="21" cy="17" r="6" fill="#5F6472"/><circle cx="49" cy="17" r="6" fill="#5F6472"/><path d="M16 21C16 15 24 12 34 12C45 12 53 15 53 21C53 27 50 31 50 35C50 41 44 45.5 35 45.5C26 45.5 19 41 19 35C19 31 16 27 16 21Z" fill="#5F6472"/><text x="22" y="39" font-family="Liberation Serif" font-style="italic" font-weight="700" font-size="20" fill="#FFFFFF">du</text><g fill="none" stroke="#5F6472" stroke-width="2.4"><path d="M87 17.8H113M94.5 14V21.5M105.2 14V21.5M90.8 23.5H104.2V32M90.8 23.5V32M97.5 20.5V37.5M87 32.8H113M97.5 37C95 40 92 41 87 41M97.5 37C100 40 104 41 113 41"/></g><circle cx="154.3" cy="21.3" r="3.8" fill="#5F6472"/><path d="M165 33.5C167.5 33.5 169 35 169 37C169 40 167 42 164.5 44" fill="none" stroke="#5F6472" stroke-width="2.6"/><circle cx="166" cy="36" r="3.2" fill="#5F6472"/><g transform="translate(11 0)"><path d="M213 15C219 17 222.5 22 222.5 28C222.5 35 217 40.5 210 40.5C204 40.5 200 37 197.5 32.5C199 33.5 201 34 203 34C209.5 34 214.5 29 214.5 22.5C214.5 20 214 17.5 213 15Z" fill="none" stroke="#5F6472" stroke-width="2.6" stroke-linejoin="round"/></g><path d="M268 28C266 30 266 37 268 40" fill="none" stroke="#5F6472" stroke-width="2.6"/></svg>
</div>
</body></html>
